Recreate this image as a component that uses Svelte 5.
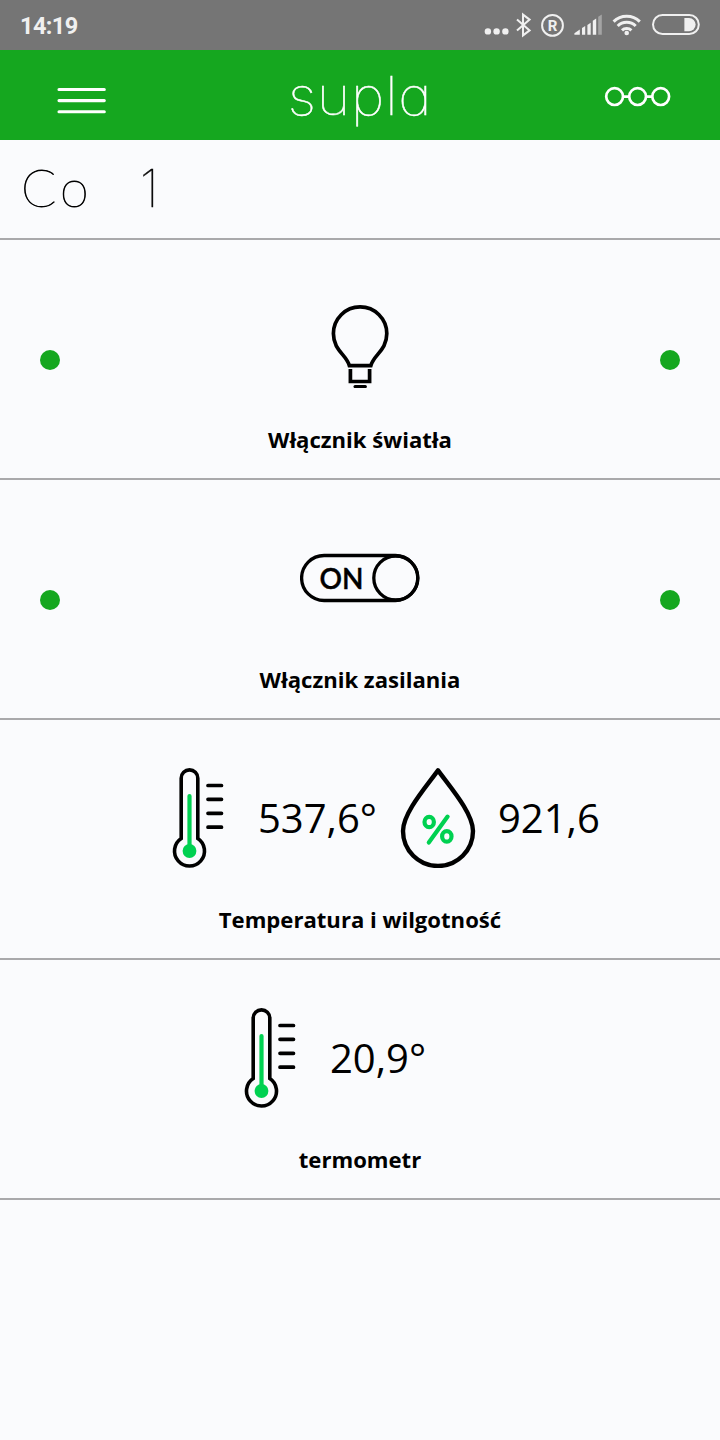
<script lang="ts">
    type Reading = { icon: "temp" | "humidity"; value: string };
    type Channel = {
        caption: string;
        icon?: "light" | "power";
        readings?: Reading[];
    };

    let time = "14:19";
    let location = "Co";
    let locationNo = "1";

    let channels: Channel[] = [
        { caption: "Włącznik światła", icon: "light" },
        { caption: "Włącznik zasilania", icon: "power" },
        {
            caption: "Temperatura i wilgotność",
            readings: [
                { icon: "temp", value: "537,6°" },
                { icon: "humidity", value: "921,6" },
            ],
        },
        { caption: "termometr", readings: [{ icon: "temp", value: "20,9°" }] },
    ];
</script>

{#snippet channelIcon(name: string)}
    <svg class="icon" viewBox="0 0 120 100">
        {#if name === "light"}
            <path
                d="M49.4 77.7C46.5 66.5 33.4 62.5 33.4 45.6a26.7 26.7 0 0 1 53.4 0C86.8 62.5 73.7 66.5 70.8 77.7z"
            />
            <path class="socket" d="M50.4 81v12.5h19.2V81" />
            <path class="foot" d="M55 98.6h10.4" />
        {:else if name === "power"}
            <rect class="track" x="1.6" y="27.5" width="116.2" height="45" rx="22.5" />
            <circle class="track" cx="95.8" cy="50" r="22" />
            <text x="19.5" y="61" textLength="44" lengthAdjust="spacingAndGlyphs">ON</text>
        {:else if name === "temp"}
            <path class="glass" d="M43.2 70.5V10.2a8.3 8.3 0 0 1 16.6 0V70.5A15 15 0 1 1 43.2 70.5z" />
            <path class="level" d="M51.5 28v52" />
            <circle class="mercury" cx="51.5" cy="83" r="6.9" />
            <path class="ticks" d="M70 17.5h13.5M70 31.3h13.5M70 45.3h13.5M70 59.2h13.5" />
        {:else}
            <path class="drop" d="M60 2.4C72 19 95 45 95 63a35 35 0 0 1-70 0C25 45 48 19 60 2.4z" />
            <g class="percent">
                <ellipse cx="51.2" cy="54" rx="4.7" ry="5.2" />
                <ellipse cx="68.8" cy="68.4" rx="4.7" ry="5.2" />
                <path d="M69.6 48.6L50.8 74.6" />
            </g>
        {/if}
    </svg>
{/snippet}

<div class="screen">
    <div class="status-bar">
        <span class="time">{time}</span>
        <svg class="status-icons" viewBox="480 0 222 50">
            <g class="fill">
                <circle cx="487.9" cy="31.4" r="3.2" />
                <circle cx="496.6" cy="31.4" r="3.2" />
                <circle cx="505.4" cy="31.4" r="3.2" />
            </g>
            <path class="line" d="M517 19.6l12.6 10.8-6.6 5V14.6l6.6 5L517 30.4" />
            <circle class="line" cx="552.5" cy="25.4" r="10.4" />
            <text x="552.6" y="31" text-anchor="middle">R</text>
            <g class="fill">
                <path d="M574.4 34.8v-1.6l5.4-3.7v5.3z" />
                <path d="M582 34.8v-6.7l3.2-2v8.7z" />
                <path d="M587.4 34.8V25l3.3-2.2v12z" />
                <path d="M592.8 34.8V20.8l3.4-2.4v16.4z" />
                <path class="dim" d="M598.2 34.8V16.8l3.6-2.4v20.4z" />
            </g>
            <g class="wifi">
                <path d="M613.6 21.6a18.6 18.6 0 0 1 26.2 0" />
                <path d="M617.7 26a12.8 12.8 0 0 1 18 0" />
                <path d="M622 30.3a6.8 6.8 0 0 1 9.4 0" />
            </g>
            <circle class="fill" cx="626.7" cy="33" r="2.3" />
            <rect class="line" x="653" y="15" width="45.8" height="19" rx="9.5" />
            <path class="fill" d="M684.4 18h4.6a6.6 6.6 0 0 1 0 13.2h-4.6z" />
        </svg>
    </div>

    <header>
        <button class="menu" aria-label="Menu">
            <svg width="50" height="30" viewBox="0 0 50 30">
                <path d="M2 4.5h45.3M2 15.6h45.3M2 26.7h45.3" />
            </svg>
        </button>
        <h1>supla</h1>
        <button class="groups" aria-label="Grupy">
            <svg width="70" height="24" viewBox="0 0 70 24">
                <circle cx="12.6" cy="12.6" r="8.4" />
                <circle cx="35.6" cy="12.6" r="8.4" />
                <circle cx="58.7" cy="12.6" r="8.4" />
                <path d="M21 12.6h6.2M44 12.6h6.3" />
            </svg>
        </button>
    </header>

    <h2 class="location">
        <span class="name">{location}</span>
        <span>{locationNo}</span>
    </h2>

    {#each channels as channel}
        <section class="channel">
            <div class="content">
                {#if channel.readings}
                    <div class="readings" class:double={channel.readings.length > 1}>
                        {#each channel.readings as reading}
                            {@render channelIcon(reading.icon)}
                            <span class="value">{reading.value}</span>
                        {/each}
                    </div>
                {:else}
                    <span class="dot"></span>
                    {@render channelIcon(channel.icon ?? "")}
                    <span class="dot"></span>
                {/if}
            </div>
            <div class="caption">{channel.caption}</div>
        </section>
    {/each}
</div>

<style>
    :global(body) {
        background: #fafbfd;
    }

    .screen {
        min-height: 1440px;
        background: #fafbfd;
        color: #000;
        font-family: "Open Sans", "Noto Sans", sans-serif;
        overflow: hidden;
    }

    .status-bar {
        display: flex;
        justify-content: space-between;
        align-items: center;
        height: 50px;
        padding: 0 18px 0 20px;
        background: #757575;
        color: #f0f0f0;
    }

    .time {
        font: 700 23.5px/50px Roboto, sans-serif;
        letter-spacing: -0.6px;
        padding-top: 2px;
    }

    .status-icons {
        width: 222px;
        height: 50px;
    }

    .status-icons .fill {
        fill: #f0f0f0;
    }

    .status-icons .dim {
        fill: #a4a4a4;
    }

    .status-icons .line {
        fill: none;
        stroke: #f0f0f0;
        stroke-width: 2;
    }

    .status-icons text {
        fill: #f0f0f0;
        font: 700 15px Roboto, sans-serif;
    }

    .wifi {
        fill: none;
        stroke: #f0f0f0;
        stroke-width: 3;
    }

    header {
        display: flex;
        justify-content: space-between;
        height: 90px;
        box-sizing: border-box;
        padding: 0 48px 0 57px;
        background: #15a71f;
        color: #fff;
    }

    button {
        display: block;
        padding: 0;
        border: none;
        background: none;
        height: 90px;
    }

    button svg {
        display: block;
        fill: none;
        stroke: #fff;
        stroke-width: 2.7;
    }

    .menu svg {
        margin-top: 10px;
        stroke-width: 3.1;
        stroke-linecap: round;
    }

    .groups svg {
        margin-top: 2px;
    }

    h1 {
        margin: 0 0 0 11px;
        padding-top: 1px;
        font: 100 53px/90px Inter, sans-serif;
        font-feature-settings: "cv11";
        letter-spacing: 0.8px;
        transform: scaleX(1.08);
        -webkit-text-stroke: 0.5px #fff;
    }

    .location {
        display: flex;
        gap: 47px;
        height: 100px;
        box-sizing: border-box;
        margin: 0;
        padding-left: 21px;
        border-bottom: 2px solid #a9a9ab;
        font: 100 52px/98px Inter, sans-serif;
        -webkit-text-stroke: 0.4px #000;
    }

    .name {
        font-family: Lato, sans-serif;
        line-height: 95px;
        letter-spacing: 4px;
        -webkit-text-stroke-width: 0.8px;
    }

    .channel {
        height: 240px;
        box-sizing: border-box;
        padding-top: 48px;
        border-bottom: 2px solid #a9a9ab;
    }

    .content {
        display: flex;
        justify-content: space-between;
        height: 100px;
        padding: 0 40px;
    }

    .dot {
        width: 20px;
        height: 20px;
        margin-top: 62px;
        border-radius: 50%;
        background: #15a71f;
    }

    .readings {
        display: grid;
        grid-template-columns: 120px 180px;
        margin: 0 auto;
    }

    .readings.double {
        grid-template-columns: 120px 120px 120px 84px;
    }

    .value {
        font-size: 40px;
        line-height: 99px;
        white-space: nowrap;
    }

    .caption {
        margin-top: 35px;
        font-size: 22.1px;
        font-weight: 700;
        line-height: 33px;
        text-align: center;
    }

    .icon {
        width: 120px;
        height: 100px;
        fill: none;
        stroke: #000;
        stroke-width: 3.7;
    }

    .icon .foot {
        stroke-width: 3;
        stroke-linecap: round;
    }

    .icon .track {
        stroke-width: 3.3;
    }

    .icon text {
        fill: #000;
        stroke: #000;
        stroke-width: 0.4;
        font: 600 29.5px Lato, sans-serif;
    }

    .icon .glass {
        stroke-width: 3.6;
    }

    .icon .level {
        stroke: #00d151;
        stroke-width: 4.2;
        stroke-linecap: round;
    }

    .icon .mercury {
        fill: #00d151;
        stroke: none;
    }

    .icon .ticks {
        stroke-linecap: round;
    }

    .icon .drop {
        stroke-width: 4.4;
        stroke-linejoin: round;
    }

    .percent {
        stroke: #00d151;
        stroke-width: 4.2;
        stroke-linecap: round;
    }
</style>
